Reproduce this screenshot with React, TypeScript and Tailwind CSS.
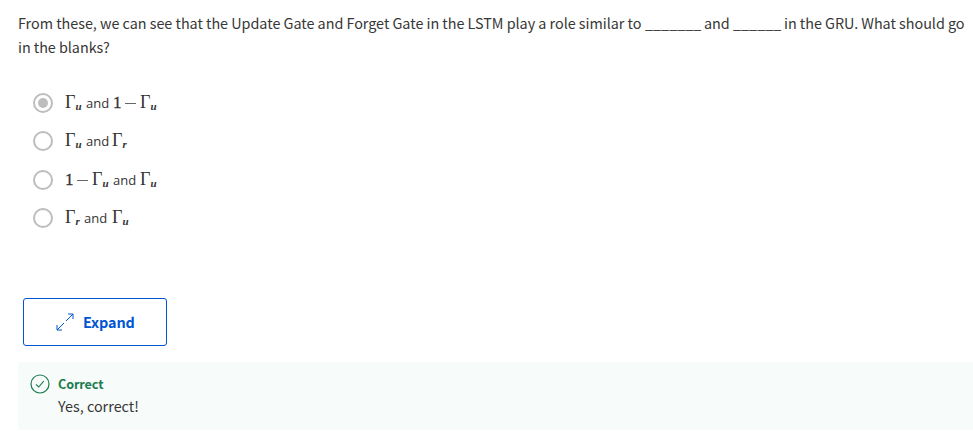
import type { ReactNode } from "react";

function Gamma({ sub, className }: { sub: string; className: string }) {
  return (
    <span className={`flex shrink-0 pt-0.5 font-['Liberation_Serif',serif] text-[18px] ${className}`}>
      <span className="w-[10.5px] shrink-0">Γ</span>
      <span className="mt-[4px] text-[11px] font-bold italic">{sub}</span>
    </span>
  );
}

function One({ className }: { className: string }) {
  return (
    <span className={`flex shrink-0 items-center font-['Liberation_Serif',serif] text-[17px] [-webkit-text-stroke:0.3px_#333] ${className}`}>
      <span className="w-[12px]">1</span>
      <span className="mt-px h-px w-[11px] bg-[#666]" />
    </span>
  );
}

function And({ className }: { className: string }) {
  return <span className={`shrink-0 text-[13px] ${className}`}>and</span>;
}

function Option({ selected, children }: { selected?: boolean; children: ReactNode }) {
  return (
    <label className="flex h-[38.3px] items-center">
      <span className="mr-3 flex size-5 shrink-0 items-center justify-center rounded-full border-2 border-[#bdbdbd]">
        {selected && <span className="size-[10px] rounded-full bg-[#bdbdbd]" />}
      </span>
      <span className="flex h-6 items-center font-['Open_Sans',sans-serif] leading-6 text-[#333]">{children}</span>
    </label>
  );
}

export default function App() {
  return (
    <main className="h-[433px] w-[973px] overflow-hidden bg-white pl-[18px] pt-[11px] font-['Noto_Sans_CJK_SC',sans-serif] text-[#373737]">
      <p className="whitespace-nowrap text-[14.4px] leading-6">
        <span className="flex">
          <span className="w-[627px] tracking-[-0.033px]">From these, we can see that the Update Gate and Forget Gate in the LSTM play a role similar to</span>
          <span className="w-[59px]">_______</span>
          <span className="w-[29px] tracking-[-0.1px]">and</span>
          <span className="w-[51px]">______</span>
          <span className="tracking-[-0.033px]">in the GRU. What should go</span>
        </span>
        <span className="block tracking-[-0.05px]">in the blanks?</span>
      </p>

      <div className="ml-[15px] mt-[25px]">
        <Option selected>
          <Gamma sub="u" className="w-[21px]" />
          <And className="w-[27px]" />
          <One className="w-[27px]" />
          <Gamma sub="u" className="" />
        </Option>
        <Option>
          <Gamma sub="u" className="w-[21px]" />
          <And className="w-[26px]" />
          <Gamma sub="r" className="" />
        </Option>
        <Option>
          <One className="w-[27px]" />
          <Gamma sub="u" className="w-[21px]" />
          <And className="w-[27px]" />
          <Gamma sub="u" className="" />
        </Option>
        <Option>
          <Gamma sub="r" className="w-[19px]" />
          <And className="w-[28px]" />
          <Gamma sub="u" className="" />
        </Option>
      </div>

      <button className="ml-[5px] mt-[60.8px] flex h-12 w-36 items-center rounded-[3px] border border-[#0056d2] pl-8 text-[14.4px] font-bold tracking-[-0.1px] text-[#0056d2]">
        <svg className="mr-[9px] size-[18px]" viewBox="0 0 18 18" fill="none" stroke="currentColor">
          <path d="M1 17 8 10M10 8l7-7M12 1h5v5M1 12v5h5" />
        </svg>
        Expand
      </button>

      <section className="mt-4 flex h-[68px] bg-[#f7fbf9] pl-3 pt-3">
        <svg className="mr-2 size-5" viewBox="0 0 20 20" fill="none" stroke="#1d7c50">
          <circle cx="10" cy="10" r="9" strokeWidth="1.2" />
          <path d="m6 10.3 2.7 2.7 5-5.8" strokeWidth="1.1" />
        </svg>
        <div>
          <p className="text-[12.6px] font-bold leading-5 tracking-[-0.1px] text-[#1d7c50]">Correct</p>
          <p className="text-[14.4px] leading-6">Yes, correct!</p>
        </div>
      </section>
    </main>
  );
}
